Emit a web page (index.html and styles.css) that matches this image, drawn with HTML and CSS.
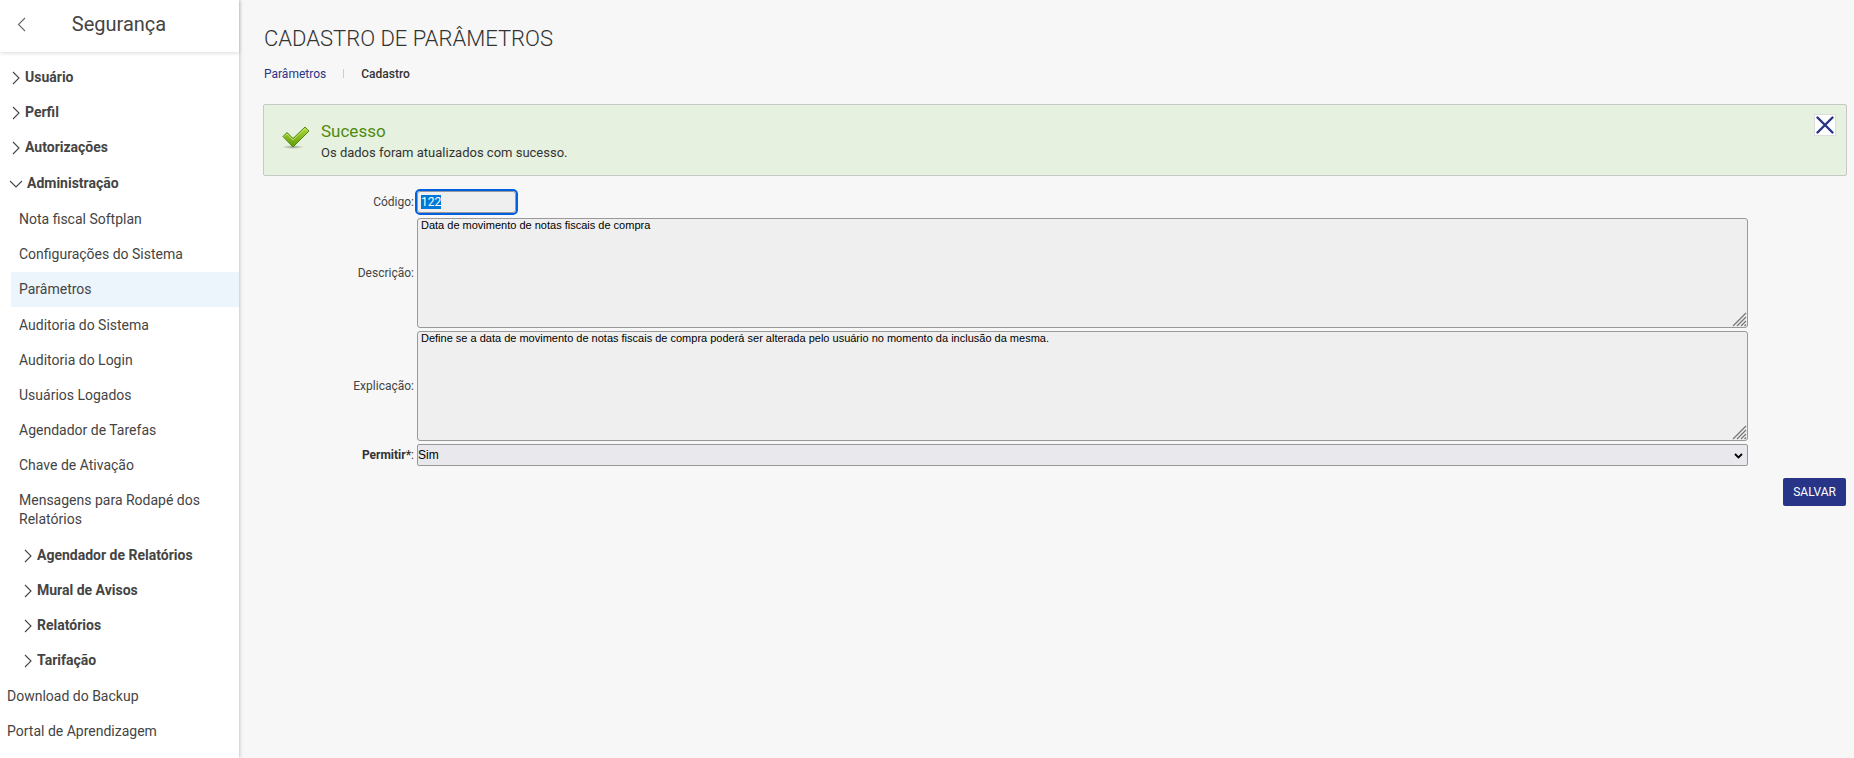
FILE: index.html
```html
<!DOCTYPE html>
<html lang="pt-BR">
<head>
  <meta charset="UTF-8">
  <meta name="viewport" content="width=device-width, initial-scale=1.0">
  <title>Cadastro de Parâmetros</title>
  <link rel="stylesheet" href="styles.css">
</head>
<body>

  <svg class="symbols" width="0" height="0">
    <symbol id="arrow-right" viewBox="0 0 8 14">
      <path d="M1 1l6 6-6 6" fill="none" stroke="currentColor" stroke-width="1.1"/>
    </symbol>
    <symbol id="arrow-down" viewBox="0 0 14 8">
      <path d="M1 1l6 6 6-6" fill="none" stroke="currentColor" stroke-width="1.1"/>
    </symbol>
    <symbol id="grip" viewBox="0 0 15 15">
      <path d="M1 14L14 1M5 14l9-9M9 14l5-5M12.500 14l1.500-1.500" fill="none" stroke="#777" stroke-width="1.3"/>
    </symbol>
  </svg>

  <nav class="sidebar">
    <div class="sidebar-header">
      <button type="button" class="back" aria-label="Voltar">
        <svg width="9" height="15" viewBox="0 0 9 15"><path d="M8 1L1.500 7.500 8 14" fill="none" stroke="#666" stroke-width="1.100"/></svg>
      </button>
      <h2>Segurança</h2>
    </div>

    <ul class="menu">
      <li><a href="#" class="group"><svg width="8" height="14"><use href="#arrow-right"/></svg>Usuário</a></li>
      <li><a href="#" class="group"><svg width="8" height="14"><use href="#arrow-right"/></svg>Perfil</a></li>
      <li><a href="#" class="group"><svg width="8" height="14"><use href="#arrow-right"/></svg>Autorizações</a></li>
      <li class="expanded">
        <a href="#" class="group open"><svg width="14" height="8"><use href="#arrow-down"/></svg>Administração</a>
        <ul class="submenu">
          <li><a href="#">Nota fiscal Softplan</a></li>
          <li><a href="#">Configurações do Sistema</a></li>
          <li><a href="#" class="active">Parâmetros</a></li>
          <li><a href="#">Auditoria do Sistema</a></li>
          <li><a href="#">Auditoria do Login</a></li>
          <li><a href="#">Usuários Logados</a></li>
          <li><a href="#">Agendador de Tarefas</a></li>
          <li><a href="#">Chave de Ativação</a></li>
          <li><a href="#">Mensagens para Rodapé dos Relatórios</a></li>
        </ul>
        <ul class="submenu">
          <li><a href="#" class="group"><svg width="8" height="14"><use href="#arrow-right"/></svg>Agendador de Relatórios</a></li>
          <li><a href="#" class="group"><svg width="8" height="14"><use href="#arrow-right"/></svg>Mural de Avisos</a></li>
          <li><a href="#" class="group"><svg width="8" height="14"><use href="#arrow-right"/></svg>Relatórios</a></li>
          <li><a href="#" class="group"><svg width="8" height="14"><use href="#arrow-right"/></svg>Tarifação</a></li>
        </ul>
      </li>
      <li><a href="#">Download do Backup</a></li>
      <li><a href="#">Portal de Aprendizagem</a></li>
    </ul>
  </nav>

  <main class="content">
    <h1>CADASTRO DE PARÂMETROS</h1>

    <div class="breadcrumb">
      <a href="#">Parâmetros</a>
      <strong>Cadastro</strong>
    </div>

    <div class="alert">
      <svg class="alert-icon" width="28" height="24" viewBox="0 0 28 24">
        <defs>
          <linearGradient id="green" x1="0" y1="0" x2="0" y2="1">
            <stop offset="0" stop-color="#b4dc3c"/>
            <stop offset="1" stop-color="#5c9a08"/>
          </linearGradient>
          <radialGradient id="shade">
            <stop offset="0" stop-color="#7d8a76" stop-opacity=".8"/>
            <stop offset="1" stop-color="#7d8a76" stop-opacity="0"/>
          </radialGradient>
        </defs>
        <ellipse cx="11" cy="21" rx="11" ry="2" fill="url(#shade)"/>
        <path d="M1 10.500L5 6.500l6 6L23 1l4 4-16 16z" fill="url(#green)" stroke="#4f8a10" stroke-width="1"/>
        <path d="M2.500 10.500L5 8l6 6L23 2.500 25.500 5" fill="none" stroke="#cdea78" stroke-width=".8"/>
      </svg>
      <div class="alert-text">
        <h3>Sucesso</h3>
        <p>Os dados foram atualizados com sucesso.</p>
      </div>
      <button type="button" class="close" aria-label="Fechar">
        <svg width="18" height="18" viewBox="0 0 18 18"><path d="M1.500 1.500l15 15M16.500 1.500l-15 15" fill="none" stroke="#283488" stroke-width="2.400" stroke-linecap="round"/></svg>
      </button>
    </div>

    <form>
      <div class="row code">
        <label for="codigo">Código:</label>
        <input type="text" id="codigo" value="122" readonly>
      </div>
      <div class="row">
        <label for="descricao">Descrição:</label>
        <div class="field">
          <textarea id="descricao" readonly>Data de movimento de notas fiscais de compra</textarea>
          <svg class="grip" width="15" height="15"><use href="#grip"/></svg>
        </div>
      </div>
      <div class="row">
        <label for="explicacao">Explicação:</label>
        <div class="field">
          <textarea id="explicacao" readonly>Define se a data de movimento de notas fiscais de compra poderá ser alterada pelo usuário no momento da inclusão da mesma.</textarea>
          <svg class="grip" width="15" height="15"><use href="#grip"/></svg>
        </div>
      </div>
      <div class="row">
        <label for="permitir"><b>Permitir*</b>:</label>
        <div class="field">
          <select id="permitir">
            <option>Sim</option>
            <option>Não</option>
          </select>
          <svg class="caret" width="9" height="6" viewBox="0 0 9 6"><path d="M1 1l3.500 3.500L8 1" fill="none" stroke="#000" stroke-width="1.800"/></svg>
        </div>
      </div>
      <div class="actions">
        <button type="submit" class="save">SALVAR</button>
      </div>
    </form>
  </main>

  <script>
    // start with the code selected
    const codigo = document.getElementById("codigo");
    codigo.focus();
    codigo.select();
  </script>

</body>
</html>
```

FILE: styles.css
```css
* {
  box-sizing: border-box;
}
body {
  display: flex;
  min-height: 100vh;
  margin: 0;
  font-family: Roboto, sans-serif;
  font-size: 12px;
  color: #333;
  background-color: #f7f7f7;
}
h1, h2, h3, p, ul {
  margin: 0;
  padding: 0;
}
a {
  text-decoration: none;
}
.symbols {
  position: absolute;
}

/* Sidebar */
.sidebar {
  flex: 0 0 239px;
  background-color: #fff;
  box-shadow: 0 0 4px rgba(0, 0, 0, 0.3);
}
.sidebar-header {
  display: flex;
  align-items: center;
  height: 52px;
  padding: 0 17px 4px;
  box-shadow: 0 1px 4px rgba(0, 0, 0, 0.15);
}
.sidebar-header h2 {
  flex: 1;
  padding-right: 10px;
  text-align: center;
  font-size: 20px;
  font-weight: 400;
  color: #444;
}
.back {
  display: flex;
  padding: 0;
  border: none;
  background: none;
  cursor: pointer;
}
.menu {
  padding-top: 8px;
  list-style: none;
}
.menu ul {
  list-style: none;
}
.menu a {
  display: block;
  padding: 8px 7px;
  font-size: 14px;
  line-height: 19px;
  color: #444;
}
.menu a.group {
  display: flex;
  align-items: center;
  gap: 5px;
  padding-left: 12px;
  font-weight: 700;
}
.menu a.open {
  gap: 4px;
  padding-left: 9px;
}
.expanded {
  padding: 1px 0;
}
.submenu {
  margin-left: 11px;
  padding-top: 1px;
}
.submenu a {
  padding-left: 8px;
}
.submenu a.group {
  padding-left: 13px;
}
.submenu a.active {
  margin-bottom: 1px;
  background-color: #ecf4fc;
}

/* Content */
.content {
  flex: 1;
  padding: 25px 7px 24px 24px;
}
h1 {
  padding-left: 1px;
  font-size: 22px;
  line-height: 28px;
  font-weight: 300;
}
.breadcrumb {
  display: flex;
  align-items: center;
  margin-top: 13px;
  padding-left: 1px;
  line-height: 16px;
}
.breadcrumb a {
  color: #283488;
}
.breadcrumb strong {
  font-weight: 500;
}
.breadcrumb a::after {
  content: "";
  display: inline-block;
  width: 1px;
  height: 9px;
  margin: 0 17px;
  background-color: #ccc;
}
.alert {
  display: flex;
  align-items: flex-start;
  margin-top: 22px;
  padding: 9px 10px 12px 18px;
  border: 1px solid #c8c8c8;
  border-radius: 2px;
  background-color: #e6f1df;
}
.alert-icon {
  margin: 12px 11px 0 0;
}
.alert-text {
  flex: 1;
  padding-top: 6px;
}
.alert h3 {
  font-size: 17px;
  line-height: 22px;
  font-weight: 400;
  color: #4f8a10;
}
.alert p {
  font-size: 13px;
  line-height: 21px;
}
.close {
  display: flex;
  align-items: center;
  justify-content: center;
  width: 22px;
  height: 22px;
  padding: 0;
  border: 1px solid #ddd;
  background-color: #fff;
  cursor: pointer;
}

/* Form */
form {
  padding-top: 15px;
}
.row {
  display: flex;
  align-items: center;
  gap: 3px;
  margin-bottom: 3px;
}
.row.code {
  margin-bottom: 5px;
}
.row label {
  width: 151px;
  text-align: right;
  color: #444;
}
.row b {
  font-weight: 700;
  color: #333;
}
.field {
  position: relative;
  width: 84%;
}
input,
textarea,
select {
  display: block;
  border: 1px solid #999;
  border-radius: 3px;
  background-color: #efefef;
  color: #000;
  font-family: "Liberation Sans", Arial, sans-serif;
}
.code input {
  width: 99px;
  height: 22px;
  padding: 0 3px;
  font-family: Roboto, sans-serif;
  font-size: 12px;
}
input:focus {
  outline: 2px solid #0060df;
}
input::selection {
  color: #fff;
  background-color: #0078d7;
}
textarea {
  width: 100%;
  height: 110px;
  padding: 0 3px;
  font-size: 11px;
  line-height: 12px;
  resize: none;
}
select {
  width: 100%;
  height: 22px;
  padding: 0;
  border-radius: 2px;
  background-color: #e9e9ed;
  font-size: 12px;
  appearance: none;
}
.grip {
  position: absolute;
  right: 1px;
  bottom: 1px;
}
.caret {
  position: absolute;
  right: 5px;
  top: 9px;
  pointer-events: none;
}
.actions {
  display: flex;
  justify-content: flex-end;
  padding: 9px 1px 0;
}
.save {
  height: 28px;
  padding: 0 10px;
  border: none;
  border-radius: 2px;
  background-color: #283488;
  color: #fff;
  font-family: Roboto, sans-serif;
  font-size: 12px;
  cursor: pointer;
}
```
